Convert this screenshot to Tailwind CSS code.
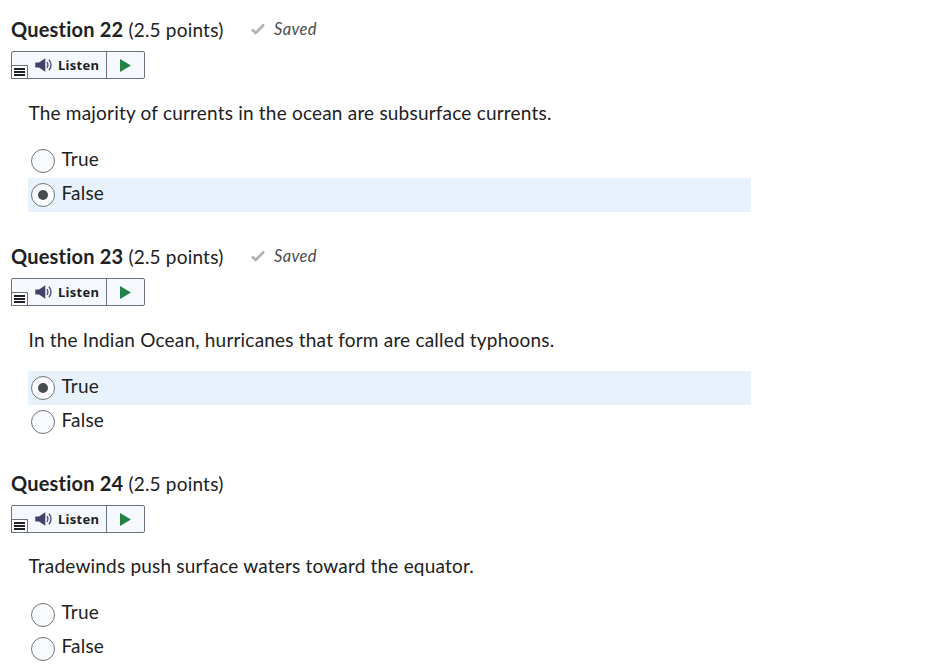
<!DOCTYPE html>
<html lang="en">
<head>
<meta charset="utf-8">
<title>Quiz</title>
<script src="https://cdn.jsdelivr.net/npm/@tailwindcss/browser@4"></script>
</head>
<body class="bg-white font-[Lato,sans-serif] text-[19px] tracking-[0.2px] text-[#202122] h-[670px] overflow-hidden">
<svg class="hidden">
  <symbol id="check" viewBox="0 0 16 14"><path d="M2 7.5 L5.7 11 L14 2.5" fill="none" stroke="#adb2b6" stroke-width="2.6"/></symbol>
  <symbol id="speaker" viewBox="0 0 18 14"><path d="M0.3 4.5H4L10.3 0.3V13.7L4 9.5H0.3Z" fill="#45426a"/><path d="M12 4.2Q13.7 7 12 9.8M14 1.8Q18 7 14 12.2" fill="none" stroke="#55527a" stroke-width="1.4"/></symbol>
  <symbol id="play" viewBox="0 0 11 13"><path d="M0 0L11 6.5L0 13Z" fill="#238145"/></symbol>
  <symbol id="menu" viewBox="0 0 11 8"><path d="M0 1H11M0 4H11M0 7H11" stroke="#202122" stroke-width="2"/></symbol>
</svg>
<main class="flex flex-col">
  <section class="h-[227px] pt-[15px]">
    <header class="flex h-7 items-center pl-[11px] leading-7">
      <h2 class="w-[239px] whitespace-nowrap"><span class="text-[20px] font-bold tracking-[0.2px]">Question 22</span> (2.5 points)</h2>
      <svg class="h-[14px] w-4"><use href="#check"/></svg>
      <span class="ml-2 text-[16.5px] italic tracking-[0.35px] text-[#494c4e]">Saved</span>
    </header>
    <div class="relative ml-[11px] mt-2 flex h-7 w-[134px] rounded-[2px] border border-[#6b747d] bg-[#f5f9fd]">
      <div class="absolute -bottom-px -left-px flex h-[14px] w-[17px] items-center justify-center border border-[#6b747d] bg-white"><svg class="h-[8px] w-[11px]"><use href="#menu"/></svg></div>
      <div class="flex w-[95px] items-center border-r border-[#6b747d] pl-[23px]"><svg class="h-[14px] w-[18px]"><use href="#speaker"/></svg><span class="ml-[5px] mt-[2px] font-['Noto_Sans',sans-serif] text-[13px] font-bold tracking-[0.3px]">Listen</span></div>
      <div class="flex flex-1 items-center justify-center"><svg class="h-[13px] w-[11px]"><use href="#play"/></svg></div>
    </div>
    <p class="ml-[28.5px] mt-[20px] h-[45px] leading-7">The majority of currents in the ocean are subsurface currents.</p>
    <div class="ml-7 w-[723px]">
      <div class="flex h-[34px] items-center pl-[3px]"><span class="size-6 rounded-full border border-[#6e7477] bg-[#f9fbff]"></span><span class="-mt-1 ml-[6.5px]">True</span></div>
      <div class="flex h-[34px] items-center bg-[#e8f2fd] pl-[3px]"><span class="flex size-6 items-center justify-center rounded-full border border-[#6e7477] bg-[#f9fbff]"><span class="size-[10px] rounded-full bg-[#494c4e]"></span></span><span class="-mt-1 ml-[6.5px]">False</span></div>
    </div>
  </section>
  <section class="h-[227px] pt-[15px]">
    <header class="flex h-7 items-center pl-[11px] leading-7">
      <h2 class="w-[239px] whitespace-nowrap"><span class="text-[20px] font-bold tracking-[0.2px]">Question 23</span> (2.5 points)</h2>
      <svg class="h-[14px] w-4"><use href="#check"/></svg>
      <span class="ml-2 text-[16.5px] italic tracking-[0.35px] text-[#494c4e]">Saved</span>
    </header>
    <div class="relative ml-[11px] mt-2 flex h-7 w-[134px] rounded-[2px] border border-[#6b747d] bg-[#f5f9fd]">
      <div class="absolute -bottom-px -left-px flex h-[14px] w-[17px] items-center justify-center border border-[#6b747d] bg-white"><svg class="h-[8px] w-[11px]"><use href="#menu"/></svg></div>
      <div class="flex w-[95px] items-center border-r border-[#6b747d] pl-[23px]"><svg class="h-[14px] w-[18px]"><use href="#speaker"/></svg><span class="ml-[5px] mt-[2px] font-['Noto_Sans',sans-serif] text-[13px] font-bold tracking-[0.3px]">Listen</span></div>
      <div class="flex flex-1 items-center justify-center"><svg class="h-[13px] w-[11px]"><use href="#play"/></svg></div>
    </div>
    <p class="ml-[28.5px] mt-[20px] h-[45px] leading-7">In the Indian Ocean, hurricanes that form are called typhoons.</p>
    <div class="ml-7 w-[723px]">
      <div class="flex h-[34px] items-center bg-[#e8f2fd] pl-[3px]"><span class="flex size-6 items-center justify-center rounded-full border border-[#6e7477] bg-[#f9fbff]"><span class="size-[10px] rounded-full bg-[#494c4e]"></span></span><span class="-mt-1 ml-[6.5px]">True</span></div>
      <div class="flex h-[34px] items-center pl-[3px]"><span class="size-6 rounded-full border border-[#6e7477] bg-[#f9fbff]"></span><span class="-mt-1 ml-[6.5px]">False</span></div>
    </div>
  </section>
  <section class="pt-[15px]">
    <header class="flex h-7 items-center pl-[11px] leading-7">
      <h2 class="w-[239px] whitespace-nowrap"><span class="text-[20px] font-bold tracking-[0.2px]">Question 24</span> (2.5 points)</h2>
    </header>
    <div class="relative ml-[11px] mt-2 flex h-7 w-[134px] rounded-[2px] border border-[#6b747d] bg-[#f5f9fd]">
      <div class="absolute -bottom-px -left-px flex h-[14px] w-[17px] items-center justify-center border border-[#6b747d] bg-white"><svg class="h-[8px] w-[11px]"><use href="#menu"/></svg></div>
      <div class="flex w-[95px] items-center border-r border-[#6b747d] pl-[23px]"><svg class="h-[14px] w-[18px]"><use href="#speaker"/></svg><span class="ml-[5px] mt-[2px] font-['Noto_Sans',sans-serif] text-[13px] font-bold tracking-[0.3px]">Listen</span></div>
      <div class="flex flex-1 items-center justify-center"><svg class="h-[13px] w-[11px]"><use href="#play"/></svg></div>
    </div>
    <p class="ml-[28.5px] mt-[19px] h-[45px] leading-7">Tradewinds push surface waters toward the equator.</p>
    <div class="ml-7 w-[723px]">
      <div class="flex h-[34px] items-center pl-[3px]"><span class="mt-px size-6 rounded-full border border-[#6e7477] bg-[#f9fbff]"></span><span class="-mt-1 ml-[6.5px]">True</span></div>
      <div class="flex h-[34px] items-center pl-[3px]"><span class="mt-px size-6 rounded-full border border-[#6e7477] bg-[#f9fbff]"></span><span class="-mt-1 ml-[6.5px]">False</span></div>
    </div>
  </section>
</main>
</body>
</html>
